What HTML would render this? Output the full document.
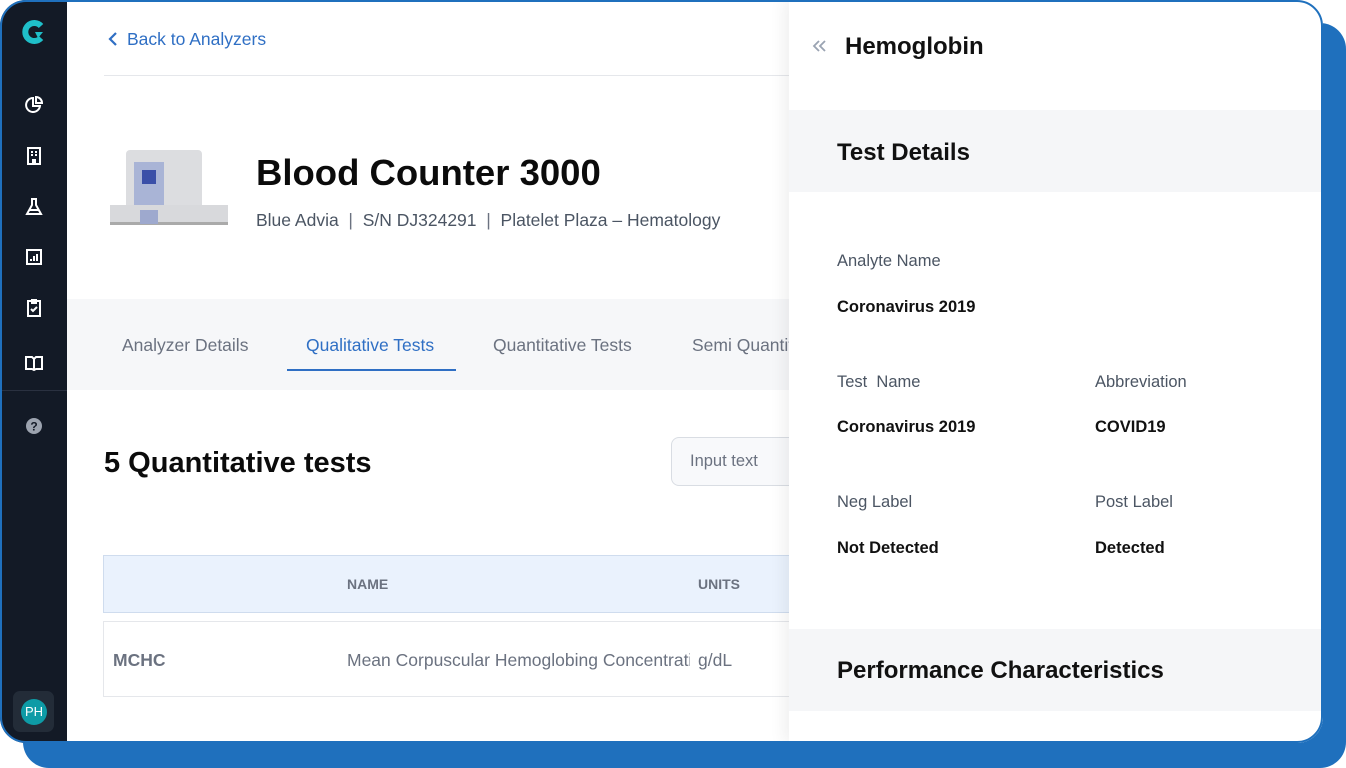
<!DOCTYPE html>
<html><head><meta charset="utf-8"><style>
*{margin:0;padding:0;box-sizing:border-box}
body{width:1346px;height:768px;background:#fff;position:relative;overflow:hidden;font-family:"Liberation Sans",sans-serif}
.back{position:absolute;left:23px;top:23px;width:1323px;height:745px;background:#1f70bd;border-radius:26px}
.frame{position:absolute;left:0;top:0;width:1323px;height:743px;background:#fff;border-radius:26px;overflow:hidden}
.rim{position:absolute;left:0;top:0;width:1323px;height:743px;border:2px solid #1f70bd;border-radius:26px}
.side{position:absolute;left:0;top:0;width:67px;height:100%;background:#131a26}
.side svg{position:absolute;left:24px}
.abs{position:absolute}
.panel{position:absolute;left:789px;top:0;width:536px;height:743px;background:#fff;box-shadow:-6px 0 14px rgba(0,0,0,.06)}
.lbl{position:absolute;font-size:16.5px;color:#4b5563}
.val{position:absolute;font-size:16.5px;font-weight:bold;color:#111}
</style></head><body>
<div class="back"></div>
<div class="frame">
<div class="side">
<svg style="top:19px;left:21px" width="26" height="26" viewBox="0 0 26 26"><path d="M20 7A9 9 0 1 0 20 19" fill="none" stroke="#1fbfc9" stroke-width="6"/><path d="M14 13h8l-5 6z" fill="#1fbfc9"/></svg>
<svg style="top:95px" width="20" height="20" viewBox="0 0 20 20" fill="none" stroke="#fff" stroke-width="2"><path d="M9 3a7 7 0 1 0 7 8H9z"/><path d="M12 2v6h6a6 6 0 0 0-6-6z"/></svg>
<svg style="top:146px" width="20" height="20" viewBox="0 0 20 20" fill="none" stroke="#fff" stroke-width="2"><rect x="4" y="2" width="12" height="16"/><path d="M7 6h2M11 6h2M7 9h2M11 9h2M9 18v-4h2v4"/></svg>
<svg style="top:197px" width="20" height="20" viewBox="0 0 20 20" fill="none" stroke="#fff" stroke-width="2"><path d="M7 2h6M8 2v6l-5 9h14l-5-9V2M5 13h10"/></svg>
<svg style="top:247px" width="20" height="20" viewBox="0 0 20 20" fill="none" stroke="#fff" stroke-width="2"><rect x="3" y="3" width="14" height="14"/><path d="M7 14v-2M10 14v-5M13 14v-7"/></svg>
<svg style="top:298px" width="20" height="20" viewBox="0 0 20 20" fill="none" stroke="#fff" stroke-width="2"><rect x="4" y="3" width="12" height="15"/><path d="M8 2h4v3H8zM7 11l2 2 4-4"/></svg>
<svg style="top:353px" width="20" height="20" viewBox="0 0 20 20" fill="none" stroke="#fff" stroke-width="2"><path d="M2 4h6l2 2 2-2h6v12h-6l-2 1-2-1H2zM10 6v11"/></svg>
<div class="abs" style="left:0;top:390px;width:67px;height:1px;background:#2a3140"></div>
<svg style="top:416px" width="20" height="20" viewBox="0 0 20 20"><circle cx="10" cy="10" r="8" fill="#9ca3af"/><text x="10" y="14.5" font-size="12" font-weight="bold" fill="#131a26" text-anchor="middle" font-family="Liberation Sans">?</text></svg>
<div class="abs" style="left:13px;top:691px;width:41px;height:41px;background:#232c38;border-radius:7px"></div>
<div class="abs" style="left:21px;top:699px;width:26px;height:26px;border-radius:50%;background:#0e9ba6;color:#fff;font-size:13px;line-height:26px;text-align:center">PH</div>
</div>
<div class="abs" style="left:127px;top:29px;color:#2f6fc4;font-size:17.5px">Back to Analyzers</div>
<svg class="abs" style="left:106px;top:31px" width="14" height="16" viewBox="0 0 14 16"><path d="M10 2L4 8l6 6" fill="none" stroke="#2f6fc4" stroke-width="2.2"/></svg>
<div class="abs" style="left:104px;top:75px;width:700px;height:1px;background:#e5e7eb"></div>
<div class="abs" style="left:110px;top:150px;width:118px;height:78px">
<div class="abs" style="left:16px;top:0;width:76px;height:56px;background:#dcdde0;border-radius:4px 4px 0 0"></div>
<div class="abs" style="left:24px;top:12px;width:30px;height:50px;background:#a9b4d6"></div>
<div class="abs" style="left:32px;top:20px;width:14px;height:14px;background:#3a4fa8"></div>
<div class="abs" style="left:0;top:55px;width:118px;height:20px;background:#d8d9dc;border-bottom:3px solid #aaa"></div>
<div class="abs" style="left:30px;top:60px;width:18px;height:14px;background:#9ea9ce"></div>
</div>
<div class="abs" style="left:256px;top:152px;font-size:36.5px;font-weight:bold;color:#0b0b0b">Blood Counter 3000</div>
<div class="abs" style="left:256px;top:210px;font-size:17.5px;color:#4b5563;white-space:pre">Blue Advia  <span style="color:#6b7280">|</span>  S/N DJ324291  <span style="color:#6b7280">|</span>  Platelet Plaza – Hematology</div>
<div class="abs" style="left:67px;top:299px;width:730px;height:91px;background:#f6f7f9"></div>
<div class="abs" style="left:122px;top:335px;font-size:17.5px;color:#6b7280">Analyzer Details</div>
<div class="abs" style="left:306px;top:335px;font-size:17.5px;color:#2f6fc4">Qualitative Tests</div>
<div class="abs" style="left:287px;top:369px;width:169px;height:2px;background:#2f6fc4"></div>
<div class="abs" style="left:493px;top:335px;font-size:17.5px;color:#6b7280">Quantitative Tests</div>
<div class="abs" style="left:692px;top:335px;font-size:17.5px;color:#6b7280">Semi Quantitative</div>
<div class="abs" style="left:104px;top:447px;font-size:29px;font-weight:bold;color:#0b0b0b">5 Quantitative tests</div>
<div class="abs" style="left:671px;top:437px;width:160px;height:49px;border:1px solid #d9dde3;border-radius:8px;background:#f8f9fb;padding:0 18px;line-height:47px;font-size:16.5px;color:#6b7280">Input text</div>
<div class="abs" style="left:103px;top:555px;width:720px;height:58px;background:#eaf2fd;border:1px solid #cfdcee"></div>
<div class="abs" style="left:347px;top:576px;font-size:14px;font-weight:bold;color:#6b7280">NAME</div>
<div class="abs" style="left:698px;top:576px;font-size:14px;font-weight:bold;color:#6b7280">UNITS</div>
<div class="abs" style="left:103px;top:621px;width:720px;height:76px;border:1px solid #e5e7eb"></div>
<div class="abs" style="left:113px;top:650px;font-size:17.5px;font-weight:bold;color:#6b7280">MCHC</div>
<div class="abs" style="left:347px;top:650px;width:343px;overflow:hidden;white-space:nowrap;font-size:17.5px;color:#6b7280">Mean Corpuscular Hemoglobing Concentration</div>
<div class="abs" style="left:698px;top:650px;font-size:17.5px;color:#6b7280">g/dL</div>
<div class="panel">
<svg class="abs" style="left:22px;top:38px" width="16" height="16" viewBox="0 0 16 16" fill="none" stroke="#9aa3b2" stroke-width="1.8"><path d="M8 3L3 8l5 5M14 3L9 8l5 5"/></svg>
<div class="abs" style="left:56px;top:33px;font-size:24px;font-weight:bold;color:#111">Hemoglobin</div>
<div class="abs" style="left:0;top:110px;width:536px;height:82px;background:#f5f6f8"></div>
<div class="abs" style="left:48px;top:139px;font-size:24px;font-weight:bold;color:#111">Test Details</div>
<div class="lbl" style="left:48px;top:252px">Analyte Name</div>
<div class="val" style="left:48px;top:298px">Coronavirus 2019</div>
<div class="lbl" style="left:48px;top:373px">Test &nbsp;Name</div>
<div class="lbl" style="left:306px;top:373px">Abbreviation</div>
<div class="val" style="left:48px;top:418px">Coronavirus 2019</div>
<div class="val" style="left:306px;top:418px">COVID19</div>
<div class="lbl" style="left:48px;top:493px">Neg Label</div>
<div class="lbl" style="left:306px;top:493px">Post Label</div>
<div class="val" style="left:48px;top:539px">Not Detected</div>
<div class="val" style="left:306px;top:539px">Detected</div>
<div class="abs" style="left:0;top:629px;width:536px;height:82px;background:#f5f6f8"></div>
<div class="abs" style="left:48px;top:657px;font-size:24px;font-weight:bold;color:#111">Performance Characteristics</div>
</div>
</div>
<div class="rim"></div>
</body></html>
